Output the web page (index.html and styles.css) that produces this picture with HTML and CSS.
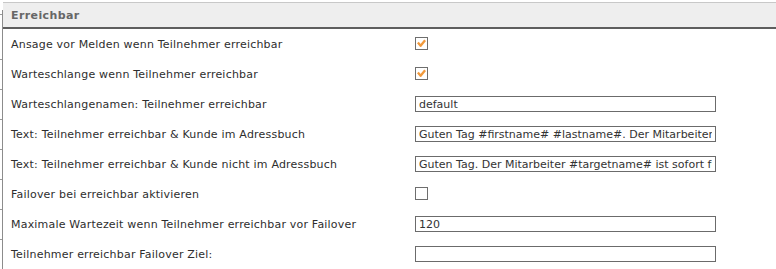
FILE: index.html
```html
<!DOCTYPE html>
<html lang="de">
<head>
    <meta charset="UTF-8">
    <title>Erreichbar</title>
    <link rel="stylesheet" href="styles.css">
</head>
<body>
    <div class="page">
        <div class="edge">
            <div class="tick first"></div>
            <div class="tick"></div>
            <div class="tick"></div>
            <div class="tick"></div>
            <div class="tick"></div>
            <div class="tick"></div>
            <div class="tick"></div>
            <div class="tick"></div>
        </div>

        <div class="panel">
            <div class="panel-header">Erreichbar</div>

            <div class="row">
                <label class="row-label">Ansage vor Melden wenn Teilnehmer erreichbar</label>
                <div class="row-field"><span class="check checked"><svg viewBox="0 0 10 10"><path d="M1 4 L4 7.5 L9 1.5" fill="none" stroke="#f29a3d" stroke-width="2.6" stroke-linejoin="round"/></svg></span></div>
            </div>
            <div class="row">
                <label class="row-label">Warteschlange wenn Teilnehmer erreichbar</label>
                <div class="row-field"><span class="check checked"><svg viewBox="0 0 10 10"><path d="M1 4 L4 7.5 L9 1.5" fill="none" stroke="#f29a3d" stroke-width="2.6" stroke-linejoin="round"/></svg></span></div>
            </div>
            <div class="row">
                <label class="row-label">Warteschlangenamen: Teilnehmer erreichbar</label>
                <div class="row-field"><input type="text" class="text-input" value="default"></div>
            </div>
            <div class="row">
                <label class="row-label">Text: Teilnehmer erreichbar &amp; Kunde im Adressbuch</label>
                <div class="row-field"><input type="text" class="text-input" value="Guten Tag #firstname# #lastname#. Der Mitarbeiter #targetname# ist sofort für Sie da."></div>
            </div>
            <div class="row">
                <label class="row-label">Text: Teilnehmer erreichbar &amp; Kunde nicht im Adressbuch</label>
                <div class="row-field"><input type="text" class="text-input" value="Guten Tag. Der Mitarbeiter #targetname# ist sofort für Sie da."></div>
            </div>
            <div class="row">
                <label class="row-label">Failover bei erreichbar aktivieren</label>
                <div class="row-field"><span class="check"></span></div>
            </div>
            <div class="row">
                <label class="row-label">Maximale Wartezeit wenn Teilnehmer erreichbar vor Failover</label>
                <div class="row-field"><input type="text" class="text-input" value="120"></div>
            </div>
            <div class="row">
                <label class="row-label">Teilnehmer erreichbar Failover Ziel:</label>
                <div class="row-field"><input type="text" class="text-input" value=""></div>
            </div>
        </div>
    </div>
</body>
</html>
```

FILE: styles.css
```css
* {
    margin: 0;
    padding: 0;
    box-sizing: border-box;
}

body {
    font-family: "DejaVu Sans", Verdana, sans-serif;
    font-size: 11px;
    letter-spacing: 0.2px;
    color: #2e2e2e;
    background: white;
}

.page {
    display: flex;
    height: 269px;
    overflow: hidden;
}

.edge {
    width: 2px;
    flex-shrink: 0;
}

.edge .tick {
    height: 30px;
    border-bottom: 1px solid #999;
}

.edge .tick.first {
    height: 15px;
    margin-bottom: 15px;
}

.panel {
    flex: 1;
    border-left: 1px solid #8c8c8c;
    margin-top: 10px;
}

.panel-header {
    margin-top: -8px;
    height: 27px;
    background: #eeeeee;
    border-top: 1px solid #c8c8c8;
    border-bottom: 2px solid #5e5e5e;
    color: #666;
    font-weight: bold;
    letter-spacing: 0.4px;
    padding: 5px 0 0 8px;
    line-height: 16px;
}

.row {
    display: flex;
    align-items: center;
    height: 30px;
}

.row-label {
    width: 412px;
    padding-left: 8px;
    flex-shrink: 0;
}

.row-field {
    display: flex;
    align-items: center;
}

.text-input {
    width: 301px;
    height: 16px;
    border: 1px solid #6b6b6b;
    padding: 0 3px;
    font-family: inherit;
    font-size: 11px;
    letter-spacing: 0;
    color: #333;
    background: white;
    outline: none;
}

.check {
    display: inline-flex;
    align-items: center;
    justify-content: center;
    width: 13px;
    height: 13px;
    border: 1px solid #6e6e6e;
    background: white;
    margin-top: -2px;
}

.check svg {
    width: 9px;
    height: 9px;
}
```
